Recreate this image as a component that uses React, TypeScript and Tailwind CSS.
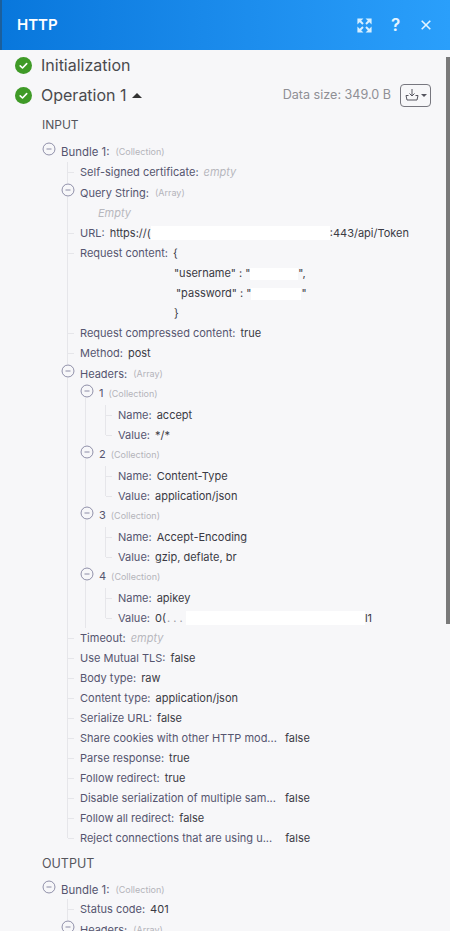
import React from 'react';

const label = 'text-[#55556f]';
const value = 'text-[#3a3a44]';

function Tick() {
  return <span className="w-[6px] h-px bg-[#e6e6ea] shrink-0" />;
}

function Minus({ className = '' }: { className?: string }) {
  return (
    <svg width="14" height="14" viewBox="0 0 14 14" className={`shrink-0 bg-[#f7f7f9] rounded-full ${className}`} fill="none" stroke="#8c8ca6" strokeWidth="1">
      <circle cx="7" cy="7" r="6" />
      <path d="M4.5 7h5" />
    </svg>
  );
}

function Row({ name, val, italic, last, children }: { name: string; val?: string; italic?: boolean; last?: boolean; children?: React.ReactNode }) {
  return (
    <div className="relative flex items-center h-5 whitespace-nowrap">
      {last && <span className="absolute -left-px top-[10px] bottom-0 w-px bg-[#f7f7f9]" />}
      <Tick />
      <span className={`ml-[6px] ${label}`}>{name}</span>
      {val && <span className={`ml-[5px] ${italic ? 'italic text-[#b8b8be]' : value}`}>{val}</span>}
      {children}
    </div>
  );
}

function Node({ name, type, className = '' }: { name: string; type: string; className?: string }) {
  return (
    <div className={`flex items-start h-[21px] whitespace-nowrap ${className}`}>
      <Minus className="-ml-[7px] mt-[1px]" />
      <span className={`ml-[5px] mt-[1px] ${label}`}>{name}</span>
      <span className="ml-[6px] mt-[1px] text-[9px] text-[#b4b4ba]">({type})</span>
    </div>
  );
}

function Header({ n, name, val, children }: { n: number; name: string; val: string; children?: React.ReactNode }) {
  return (
    <div className="ml-[17px] border-l border-[#e6e6ea]">
      <div className="flex items-start h-[21px] whitespace-nowrap">
        <Minus className="-ml-[6px] shrink-0" />
        <span className={`ml-[5px] -mt-px ${label}`}>{n}</span>
        <span className="ml-[5px] text-[9px] text-[#b4b4ba]">(Collection)</span>
      </div>
      <div className="ml-[19px] border-l border-[#e6e6ea]">
        <Row name="Name:" val={name} />
        <Row name="Value:" val={children ? undefined : val} last>{children}</Row>
      </div>
    </div>
  );
}

function Check() {
  return (
    <svg width="17" height="17" viewBox="0 0 17 17" className="shrink-0">
      <circle cx="8.5" cy="8.5" r="8.5" fill="#3f9a27" />
      <path d="M5.2 8.8l2.3 2.2 4.2-4.4" fill="none" stroke="#fff" strokeWidth="1.6" strokeLinecap="round" strokeLinejoin="round" />
    </svg>
  );
}

export default function App() {
  return (
    <div className="relative w-[450px] h-[931px] overflow-hidden bg-[#f7f7f9] text-[11px] leading-5 font-['Inter',sans-serif]">
      {/* Title bar */}
      <div className="h-[50px] flex items-center pl-[15px] pr-[19px] border-l-2 border-l-[#1b5f9c] bg-gradient-to-r from-[#0877dc] to-[#2a9ffb] text-white">
        <span className="text-[15px] font-semibold">HTTP</span>
        <div className="ml-auto flex items-center">
          <svg width="15" height="15" viewBox="0 0 15 15" fill="#d6efff" stroke="#d6efff" strokeWidth="1.2">
            <path d="M1 5V1h4zM10 1h4v4zM14 10v4h-4zM5 14H1v-4z" />
            <path d="M2 2l4 4M13 2l-4 4M13 13l-4-4M2 13l4-4" strokeWidth="2" />
          </svg>
          <span className="ml-[19px] w-[10px] text-[17px] font-semibold leading-none text-[#e4f4ff]">?</span>
          <svg width="10" height="10" viewBox="0 0 10 10" fill="none" stroke="#e4f4ff" strokeWidth="1.6" className="ml-[20px]">
            <path d="M.7.7l8.6 8.6M9.3.7L.7 9.3" />
          </svg>
        </div>
      </div>

      {/* Operations */}
      <div className="pl-[15px] pr-[19px] pt-[5px]">
        <div className="flex items-center h-[20px] gap-[9px]">
          <Check />
          <span className="text-[16px] text-[#4a4a4e]">Initialization</span>
        </div>
        <div className="flex items-center h-[22px] mt-[9px] gap-[9px]">
          <Check />
          <span className="text-[16px] text-[#4a4a4e]">Operation 1</span>
          <span className="-ml-[4px] w-0 h-0 border-x-[5px] border-x-transparent border-b-[5px] border-b-[#333]" />
          <span className="ml-auto text-[12.6px] text-[#8f8f95]">Data size: 349.0 B</span>
          <div className="w-[31px] h-[23px] flex items-center justify-center gap-[2px] border border-[#77777f] rounded-[4px]">
            <svg width="14" height="14" viewBox="0 0 14 14" fill="none" stroke="#55555f" strokeWidth="1">
              <path d="M7 1v7M4.5 5.5L7 8l2.5-2.5M3.5 7.5H1l1 4.5h10l1-4.5h-2.5" />
            </svg>
            <span className="w-0 h-0 border-x-[3px] border-x-transparent border-t-[3px] border-t-[#55555f]" />
          </div>
        </div>
      </div>

      {/* Input */}
      <div className="mt-[9px] ml-[42px] text-[12px] text-[#55555c]">INPUT</div>
      <div className="mt-[6px] ml-[42px]">
        <Node name="Bundle 1:" type="Collection" className="ml-[7px] text-[11.4px]" />
        <div className="ml-[25px] border-l border-[#e6e6ea]">
          <Row name="Self-signed certificate:" val="empty" italic />
          <Node name="Query String:" type="Array" />
          <div className="h-5 pl-[30px] italic text-[#b8b8be]">Empty</div>
          <Row name="URL:" val="https://(">
            <span className="w-[179px] h-[14px] bg-white" />
            <span className={value}>:443/api/Token</span>
          </Row>
          <Row name="Request content:" val="{" />
          <div className={`h-5 pl-[106px] whitespace-nowrap ${value}`}>
            "username" : "<span className="inline-block w-[48px] h-[12px] bg-white align-middle" />",
          </div>
          <div className={`h-5 pl-[108px] whitespace-nowrap ${value}`}>
            "password" : "<span className="inline-block w-[50px] h-[12px] bg-white align-middle" />"
          </div>
          <div className={`h-5 pl-[106px] ${value}`}>{'}'}</div>
          <Row name="Request compressed content:" val="true" />
          <Row name="Method:" val="post" />
          <Node name="Headers:" type="Array" />
          <Header n={1} name="accept" val="*/*" />
          <Header n={2} name="Content-Type" val="application/json" />
          <Header n={3} name="Accept-Encoding" val="gzip, deflate, br" />
          <Header n={4} name="apikey" val="">
            <span className={`ml-[5px] ${value}`}>0(</span>
            <span className="ml-[1px] w-[19px] text-[#9a9aa2]">. . .</span>
            <span className="w-[179px] h-[14px] bg-white" />
            <span className={value}>l1</span>
          </Header>
          <Row name="Timeout:" val="empty" italic />
          <Row name="Use Mutual TLS:" val="false" />
          <Row name="Body type:" val="raw" />
          <Row name="Content type:" val="application/json" />
          <Row name="Serialize URL:" val="false" />
          <Row name="Share cookies with other HTTP mod...">
            <span className={`ml-[8px] ${value}`}>false</span>
          </Row>
          <Row name="Parse response:" val="true" />
          <Row name="Follow redirect:" val="true" />
          <Row name="Disable serialization of multiple sam...">
            <span className={`ml-[9px] ${value}`}>false</span>
          </Row>
          <Row name="Follow all redirect:" val="false" />
          <Row name="Reject connections that are using u..." last>
            <span className={`ml-[13px] ${value}`}>false</span>
          </Row>
        </div>
      </div>

      {/* Output */}
      <div className="mt-[6px] ml-[42px] text-[12.5px] text-[#55555c]">OUTPUT</div>
      <div className="mt-[5px] ml-[42px]">
        <Node name="Bundle 1:" type="Collection" className="ml-[7px] -mb-px text-[11.4px]" />
        <div className="ml-[25px] border-l border-[#e6e6ea]">
          <Row name="Status code:" val="401" />
          <Node name="Headers:" type="Array" />
        </div>
      </div>

      {/* Scrollbar thumb */}
      <div className="absolute right-0 top-[57px] w-1 h-[567px] bg-[#7a7a7a]" />
    </div>
  );
}
